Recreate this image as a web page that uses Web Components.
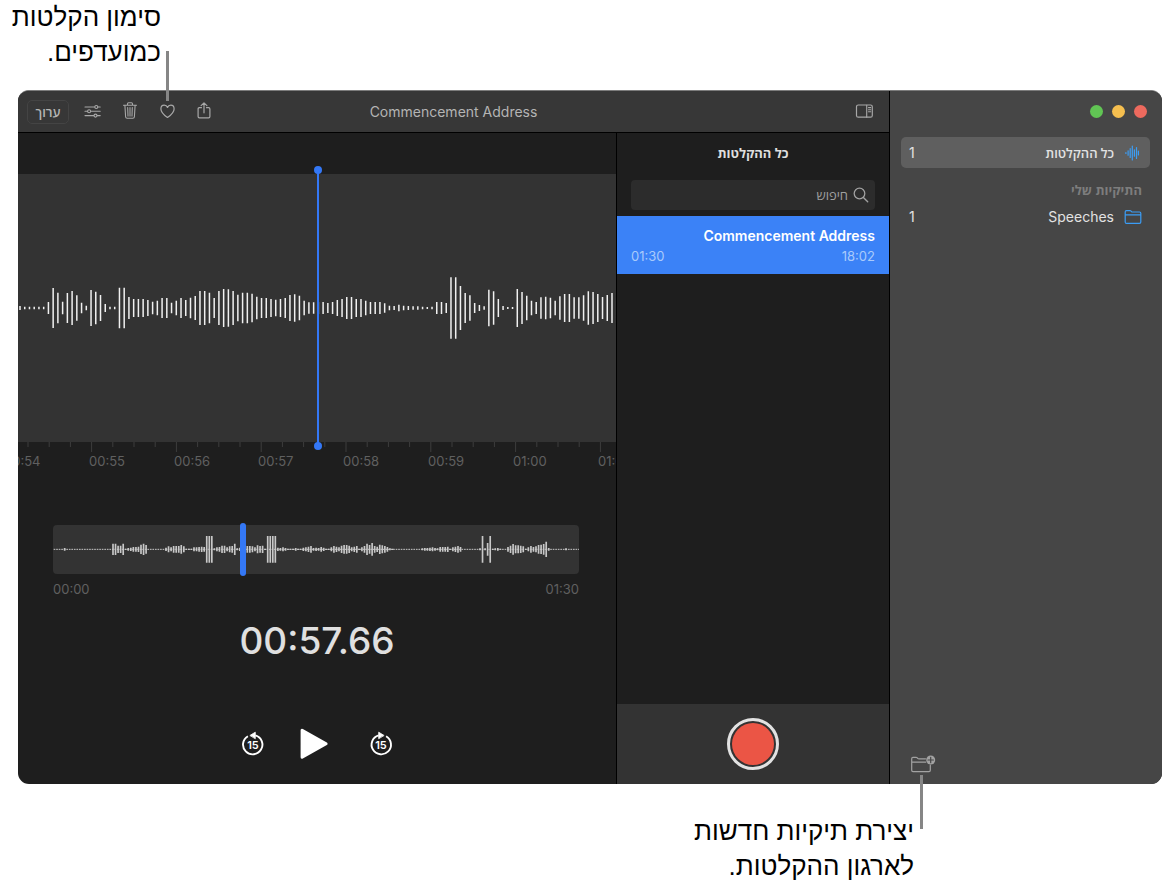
<!DOCTYPE html>
<html lang="he">
<head>
<meta charset="utf-8">
<meta name="viewport" content="width=device-width, initial-scale=1">
<title>Voice Memos</title>
<style>
  body {
    margin: 0;
    min-height: 100vh;
    display: flex;
    flex-direction: column;
    background: #fff;
    color: #000;
    font-family: Inter, "Open Sans", "Liberation Sans", sans-serif;
  }
  memo-window { flex: 1; }
</style>
</head>
<body>
<callout-note side="top"><span>סימון הקלטות</span><span>כמועדפים.</span></callout-note>
<memo-window></memo-window>
<callout-note side="bottom"><span>יצירת תיקיות חדשות</span><span>לארגון ההקלטות.</span></callout-note>

<script>
const define = (name, css, html, setup) => {
  const template = document.createElement('template');
  template.innerHTML = `<style>
    :host, * { box-sizing: border-box; }
    button { font: inherit; color: inherit; background: none; border: 0; padding: 0; margin: 0; display: grid; place-items: center; }
    ${css}</style>${html}`;
  customElements.define(name, class extends HTMLElement {
    connectedCallback() {
      if (this.shadowRoot) return;
      this.attachShadow({ mode: 'open' }).append(template.content.cloneNode(true));
      if (setup) setup(this, this.shadowRoot);
    }
  });
};

/* Icons: [width, height, drawing] */
const ICONS = {
  sliders: [21, 21, '<g stroke-width="1.1"><path d="M3 6h9.6M16 6h2.2M3 10.300h2.4M8.8 10.300h9.4M3 14.600h8.8M15.2 14.600h3"/><circle cx="14.3" cy="6" r="1.5"/><circle cx="7.1" cy="10.300" r="1.5"/><circle cx="13.5" cy="14.600" r="1.5"/></g>'],
  trash: [21, 21, '<g stroke-width="1.1"><path d="M4.500 4.200h13M8.500 4V2.700q0-1 1-1h3q1 0 1 1V4M5.900 4.200l.7 11.600q.1 1.500 1.500 1.500h5.800q1.400 0 1.500-1.500l.7-11.600M8.700 6.500l.3 8.600M11 6.500v8.600M13.300 6.500l-.3 8.600"/></g>'],
  heart: [21, 21, '<path stroke-width="1.2" d="M11.500 16.500C7.700 13.800 4.900 11.100 4.900 7.900 4.900 5.700 6.400 4.200 8.200 4.200 9.700 4.200 10.900 5 11.500 6.500 12.100 5 13.300 4.200 14.800 4.200 16.600 4.200 18.100 5.700 18.100 7.900 18.100 11.100 15.300 13.800 11.500 16.500z"/>'],
  share: [21, 21, '<path stroke-width="1.2" d="M8.500 6.700H6.400q-1.300 0-1.300 1.300v7.600q0 1.300 1.300 1.300h9.200q1.300 0 1.300-1.300V8q0-1.300-1.300-1.300h-2.100M11 11.800V2M8.100 4.700l2.900-2.900 2.900 2.900"/>'],
  sidebar: [21, 21, '<rect x="2.500" y="4" width="15.800" height="12.200" rx="1.800" stroke-width="1.200"/><path stroke-width="1.100" d="M12.700 4.200v12M14.500 6.600h2.200M14.500 8.700h2.200M14.500 10.800h2.200"/>'],
  search: [16, 16, '<circle cx="6.500" cy="6.500" r="5.300" stroke-width="1.300"/><path stroke-width="1.400" d="M10.400 10.400l4.300 4.300"/>'],
  wave: [18, 18, '<path stroke-width="1.200" d="M1.900 8.500v1M4.100 6.800v4.400M6.200 4.500v9M8.300 2v14M10.400 5.800v6.400M12.500 3.500v11M14.400 7v4"/>'],
  folder: [18, 18, '<path stroke-width="1.200" d="M1.200 13.600V4q0-1.300 1.300-1.300h3.400q.7 0 1.200.5l.5.500q.4.300 1 .300h6.900q1.300 0 1.300 1.300v8.800q0 1.300-1.300 1.300h-13q-1.300 0-1.300-1.300zM1.200 6.900h15.600"/>'],
  newfolder: [26, 20, '<path stroke-width="1.200" d="M15.500 4.800H8.900q-.6 0-1-.3l-.6-.6q-.5-.5-1.200-.5H3Q1.700 3.400 1.700 4.700v11.600q0 1.300 1.300 1.300h16q1.300 0 1.300-1.300v-5.100M1.700 8.200h14"/><circle cx="20.700" cy="6" r="4.500" fill="currentColor" stroke="none"/><path stroke="#464646" stroke-width="1.200" d="M20.700 3.300v5.400M18 6h5.400"/>'],
  play: [40, 40, '<path fill="currentColor" stroke="currentColor" stroke-width="3" d="M5.100 6.200v27L29.100 19.700z"/>'],
  back: [24, 26, '<path stroke-width="1.900" stroke-linecap="butt" d="M14.400 4.300A9.700 9.700 0 1 1 6.900 5.200"/><path fill="currentColor" stroke="currentColor" stroke-width=".800" d="M9.200 4.300L14.300 1.200v6.200z"/>'],
  forward: [24, 26, '<path stroke-width="1.900" stroke-linecap="butt" d="M9.600 4.300A9.700 9.700 0 1 0 17.100 5.200"/><path fill="currentColor" stroke="currentColor" stroke-width=".800" d="M14.800 4.300L9.700 1.200v6.200z"/>']
};
define('ui-icon', ':host{display:block} svg{display:block}', '<svg fill="none" stroke="currentColor" stroke-linecap="round" stroke-linejoin="round" aria-hidden="true"></svg>', (el, root) => {
  const [w, h, art] = ICONS[el.getAttribute('name')];
  const svg = root.querySelector('svg');
  svg.setAttribute('viewBox', `0 0 ${w} ${h}`);
  svg.setAttribute('width', w);
  svg.setAttribute('height', h);
  svg.innerHTML = art;
});

define('callout-note', `
  :host { display: flex; flex-direction: column; position: relative; z-index: 1; direction: rtl;
    font: 26px/35px "Liberation Sans", sans-serif; }
  :host([side=top]) { width: 161px; height: 90px; }
  :host([side=bottom]) { margin-right: 248px; height: 104px; padding-top: 30px; }
  :host::after { content: ""; position: absolute; width: 3px; background: #868686; }
  :host([side=top])::after { left: 166px; top: 51px; height: 50px; }
  :host([side=bottom])::after { right: -9px; top: -9px; height: 54px; }
`, '<slot></slot>');

define('memo-window', `
  :host { display: grid; grid-template-columns: 1fr 272px; margin-left: 18px; overflow: hidden;
    border-top: 1px solid #7c7c7c; border-radius: 11px; background: #1e1e1e; color: #dedede; }
  .content { display: grid; grid-template: 42px 1fr / 1fr 273px; border-right: 1px solid #000; min-width: 0; }
  memo-toolbar { grid-column: 1 / 3; }
`, `
  <div class="content">
    <memo-toolbar></memo-toolbar>
    <memo-editor></memo-editor>
    <memo-list></memo-list>
  </div>
  <memo-sidebar></memo-sidebar>
`);

define('memo-toolbar', `
  :host { display: grid; grid-template-columns: 1fr auto 1fr; align-items: center; padding: 0 9px;
    background: #373737; border-bottom: 1px solid #000; color: #a8a8a8; }
  .tools { display: flex; align-items: center; }
  .edit { width: 42px; height: 24px; margin-right: 5px; border: 1px solid #444; border-radius: 5px;
    font: 600 13px/20px "Open Sans", sans-serif; color: #b4b4b4; }
  .icon { width: 37px; height: 24px; }
  .panel { justify-self: end; width: 32px; }
  h1 { margin: 0; font-size: 14px; line-height: 20px; font-weight: 400; color: #b4b4b4; }
`, `
  <div class="tools">
    <button class="edit">ערוך</button>
    <button class="icon" aria-label="אפשרויות"><ui-icon name="sliders"></ui-icon></button>
    <button class="icon" aria-label="מחיקה"><ui-icon name="trash"></ui-icon></button>
    <button class="icon" aria-label="מועדף"><ui-icon name="heart"></ui-icon></button>
    <button class="icon" aria-label="שיתוף"><ui-icon name="share"></ui-icon></button>
  </div>
  <h1>Commencement Address</h1>
  <button class="icon panel" aria-label="סרגל צד"><ui-icon name="sidebar"></ui-icon></button>
`);

define('memo-editor', `
  :host { display: flex; flex-direction: column; min-width: 0; }
  memo-waveform { flex: 1; margin-top: 41px; }
  memo-overview { margin: 0 37px 0 35px; }
  .clock { margin: 20px 0 0; text-align: center; font-size: 37px; line-height: 46px; font-weight: 500; color: #e0e0e0; }
  .transport { display: flex; justify-content: center; align-items: center; gap: 32px; height: 40px; margin: 60px 0 20px; color: #fff; }
  .skip { position: relative; width: 24px; height: 26px; }
  .skip span { position: absolute; inset: 7px 0 0; font-size: 11px; line-height: 14px; font-weight: 600; text-align: center; }
`, `
  <memo-waveform></memo-waveform>
  <memo-overview></memo-overview>
  <p class="clock">00:57.66</p>
  <div class="transport">
    <button class="skip" aria-label="אחורה 15"><ui-icon name="back"></ui-icon><span>15</span></button>
    <button aria-label="ניגון"><ui-icon name="play"></ui-icon></button>
    <button class="skip" aria-label="קדימה 15"><ui-icon name="forward"></ui-icon><span>15</span></button>
  </div>
`);

/* Bar heights in thirds of a pixel, one bar per step of the recording */
const BARS = [12,8,8,8,8,8,36,120,92,38,90,102,76,32,14,108,98,78,24,8,8,122,122,66,54,54,54,48,38,44,60,60,32,44,60,48,62,72,102,102,92,60,102,114,112,102,80,92,92,86,68,60,60,54,50,54,60,78,82,74,44,34,34,36,36,30,36,48,54,66,66,54,54,44,36,36,36,28,14,12,20,14,12,10,10,8,6,8,36,36,30,184,184,132,90,76,30,18,10,110,100,54,12,6,6,114,96,74,44,36,64,68,62,44,70,84,84,64,64,76,100,96,84,66,78,90,90];
define('memo-waveform', `
  :host { display: flex; flex-direction: column; min-width: 0; }
  .stage { position: relative; flex: 1; min-height: 100px; display: flex; align-items: center; background: #333; }
  .clip { width: 100%; display: flex; justify-content: center; overflow: hidden; }
  svg { display: block; flex: none; }
  .head { position: absolute; top: -4px; bottom: -4px; left: 50%; width: 2px; background: #3478f6; }
  .head::before, .head::after { content: ""; position: absolute; left: -3px; width: 8px; height: 8px; border-radius: 50%; background: #3478f6; }
  .head::before { top: -4px; }
  .head::after { bottom: -4px; }
  .ruler { height: 83px; }
  text { font-size: 13px; fill: #606060; }
`, `
  <div class="stage"><div class="clip"><svg class="wave" width="598" height="100"></svg></div><div class="head"></div></div>
  <div class="clip ruler"><svg class="marks" width="598" height="40"></svg></div>
`, (el, root) => {
  root.querySelector('.wave').innerHTML = `<path stroke="#f0f0f0" stroke-width="1.500" d="${
    BARS.map((h, i) => `M${(2 + i * 4.736).toFixed(2)} ${(50 - h / 6).toFixed(2)}v${(h / 3).toFixed(2)}`).join('')}"/>`;
  let marks = '';
  for (let i = 0; i < 30; i++) {
    marks += `<path stroke="#3d3d3d" d="M${(-11.2 + i * 21.2).toFixed(1)} 0v${i % 4 === 0 ? 10 : 5}"/>`;
  }
  ['00:54', '00:55', '00:56', '00:57', '00:58', '00:59', '01:00', '01:01'].forEach((t, i) => {
    marks += `<text x="${Math.round(-14 + i * 84.8)}" y="24">${t}</text>`;
  });
  root.querySelector('.marks').innerHTML = marks;
});

/* Louder passages of the whole recording: [start, bar heights], in thirds of a pixel */
const PASSAGES = [
  [35,[8]],
  [180,[34,34,22,22,34,4,8,10,14,14,16,28,34,26]],
  [339,[10,18,12,20,20,20,26,18,4,4,4,12,12,14,16,14,80,80,80,6,12,14,22,22,12,18,20,34,6,10]],
  [583,[20,20,18,12,24,20,22,4,80,80,80,80,10,8,12,8,4,4,4,8,4,4,10,12,16,20,8,10,8,14,10,4,4,12,20,16,12,22,26,26,22,12,16,20,4,12,20,34,26,38,20,16,28,24,20,14,6,4]],
  [1108,[6,8,8,10,12,8,6,14,14,14,16,4,12,16,20,14]],
  [1281,[6,80,6,38,80,4,6,8,4]],
  [1365,[14,22,32,24,24,22,18,4,12,20,14,18,26,28,32,46,8]],
  [1539,[6]]
];
define('memo-overview', `
  :host { display: block; }
  .track { position: relative; height: 49px; border-radius: 4px; background: #333; }
  svg { display: block; width: 100%; height: 49px; }
  input { position: absolute; inset: -2px 0; width: 100%; height: 53px; margin: 0; appearance: none; background: none; }
  input::-webkit-slider-thumb { appearance: none; width: 6px; height: 53px; border-radius: 3px; background: #3478f6; }
  .times { display: flex; justify-content: space-between; margin-top: 6px; font-size: 13px; line-height: 18px; color: #606060; }
`, `
  <div class="track">
    <svg viewBox="0 0 1578 147" preserveAspectRatio="none"></svg>
    <input type="range" min="0" max="100" value="36" aria-label="מיקום בהקלטה">
  </div>
  <div class="times"><span>00:00</span><span>01:30</span></div>
`, (el, root) => {
  const bars = PASSAGES.map(([x, hs]) => hs.map((h, i) => `M${(x + i * 7.64).toFixed(1)} ${73 - h / 2}v${h}`).join('')).join('');
  root.querySelector('svg').innerHTML =
    `<path stroke="#c8c8c8" stroke-width="3" stroke-dasharray="5 2.600" d="M2 73H1578"/><path stroke="#c8c8c8" stroke-width="5" d="${bars}"/>`;
});

define('memo-list', `
  :host { display: flex; flex-direction: column; border-left: 1px solid #000; direction: rtl; }
  h2 { margin: 10px 0 17px; text-align: center; font: 700 13px/20px "Open Sans", sans-serif; color: #dedede; }
  .search { display: flex; align-items: center; gap: 5px; height: 30px; margin: 0 14px 6px; padding: 0 6px; border-radius: 4px; background: #2c2c2c; color: #a0a0a0; }
  input { flex: 1; min-width: 0; border: 0; padding: 0; background: none; font: 13px/20px "Open Sans", sans-serif; color: inherit; }
  input::placeholder { color: #a0a0a0; }
  footer { display: grid; place-items: center; height: 80px; margin-top: auto; background: #333; }
  .record { width: 52px; height: 52px; border: 3px solid #e2e2e2; border-radius: 50%; }
  .record::before { content: ""; width: 42px; height: 42px; border-radius: 50%; background: #eb5545; }
`, `
  <h2>כל ההקלטות</h2>
  <label class="search"><ui-icon name="search"></ui-icon><input type="search" placeholder="חיפוש" aria-label="חיפוש"></label>
  <memo-recording time="18:02" duration="01:30">Commencement Address</memo-recording>
  <footer><button class="record" aria-label="הקלטה"></button></footer>
`);

define('memo-recording', `
  :host { display: grid; grid-template: 20px 20px / 1fr auto; padding: 10px 14px 8px; direction: rtl;
    background: #3b82f7; color: #fff; line-height: 20px; }
  .name { grid-column: 1 / 3; font-size: 14px; font-weight: 600; direction: ltr; text-align: right; }
  .meta { font-size: 13px; color: #a9cafb; }
`, '<div class="name"><slot></slot></div><span class="meta time"></span><span class="meta duration"></span>', (el, root) => {
  root.querySelector('.time').textContent = el.getAttribute('time');
  root.querySelector('.duration').textContent = el.getAttribute('duration');
});

define('memo-sidebar', `
  :host { display: flex; flex-direction: column; padding: 14px 12px 8px 11px; background: #464646; direction: rtl; }
  .lights { display: flex; gap: 9px; padding: 0 3px; height: 32px; }
  .lights i { width: 13px; height: 13px; border-radius: 50%; }
  h3 { margin: 12px 8px 1px; font: 700 13px/20px "Open Sans", sans-serif; color: #7d7d7d; }
  .new { width: 26px; height: 24px; margin: auto auto 0 9px; color: #a2a2a2; }
`, `
  <div class="lights"><i style="background:#ed6a5e"></i><i style="background:#f5bf4f"></i><i style="background:#61c554"></i></div>
  <memo-folder icon="wave" count="1" selected>כל ההקלטות</memo-folder>
  <h3>התיקיות שלי</h3>
  <memo-folder icon="folder" count="1">Speeches</memo-folder>
  <button class="new" aria-label="תיקייה חדשה"><ui-icon name="newfolder"></ui-icon></button>
`);

define('memo-folder', `
  :host { display: flex; align-items: center; gap: 10px; height: 31px; padding: 0 8px; border-radius: 5px;
    font: 14px/20px Inter, "Open Sans", sans-serif; color: #e2e2e2; }
  :host([selected]) { background: #5f5f5f; }
  :host([selected]) .name { font-size: 13px; font-weight: 600; }
  ui-icon { color: #3b9df5; }
  .count { margin-right: auto; }
`, '<span class="name"><slot></slot></span><span class="count"></span>', (el, root) => {
  const icon = document.createElement('ui-icon');
  icon.setAttribute('name', el.getAttribute('icon'));
  root.querySelector('.name').before(icon);
  root.querySelector('.count').textContent = el.getAttribute('count');
});
</script>
</body>
</html>
